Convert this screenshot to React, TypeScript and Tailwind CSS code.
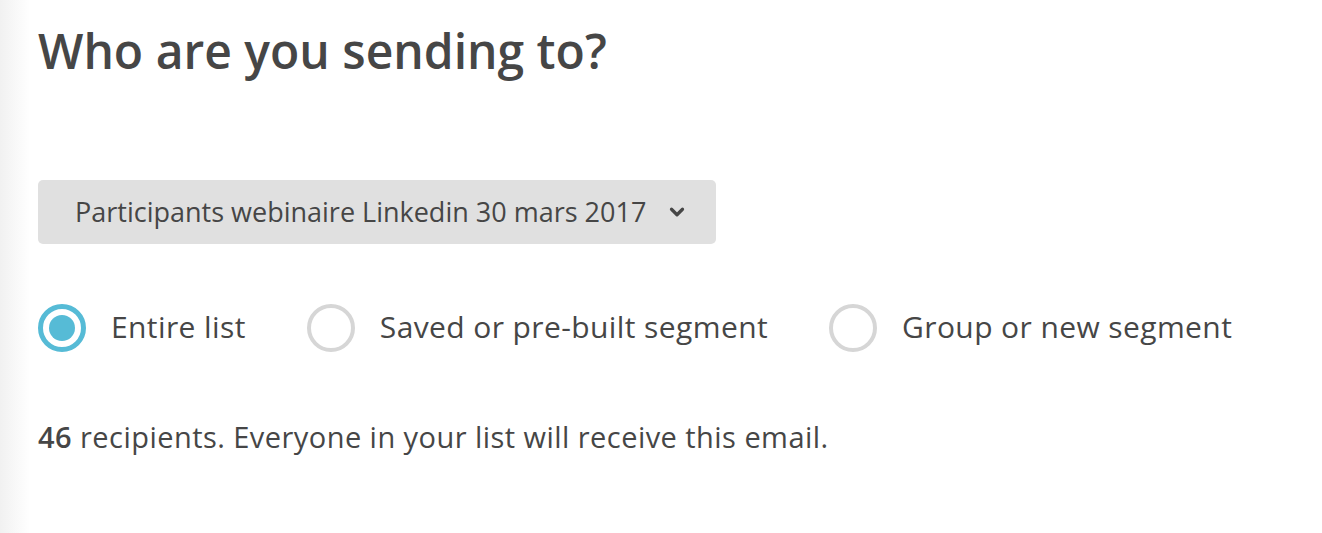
import { ChevronDown } from "lucide-react";

const options = [
  { label: "Entire list", checked: true },
  { label: "Saved or pre-built segment", checked: false },
  { label: "Group or new segment", checked: false },
];

function Radio({ checked }: { checked: boolean }) {
  return checked ? (
    <span className="w-12 h-12 rounded-full border-[5px] border-[#56bbd6] flex items-center justify-center shrink-0">
      <span className="w-[26px] h-[26px] rounded-full bg-[#56bbd6]" />
    </span>
  ) : (
    <span className="w-12 h-12 rounded-full border-[4px] border-[#d6d6d6] shrink-0" />
  );
}

export default function App() {
  return (
    <div
      className="relative w-[1322px] h-[533px] bg-white overflow-hidden text-[#464646]"
      style={{ fontFamily: '"Open Sans", "Noto Sans", sans-serif' }}
    >
      {/* soft shadow on the left edge */}
      <div className="absolute inset-y-0 left-0 w-[30px] bg-gradient-to-r from-[#f1f1f1] to-white" />

      <div className="relative pl-[38px] pt-[19px]">
        <h1 className="text-[48px] leading-[64px] font-semibold">Who are you sending to?</h1>

        <button className="mt-[97px] h-16 w-[678px] rounded-[5px] bg-[#e0e0e0] flex items-center pl-[37px] gap-[20px] text-[27px] font-medium text-[#464646]">
          <span>Participants webinaire Linkedin 30 mars 2017</span>
          <ChevronDown className="w-[22px] h-[22px]" strokeWidth={3.5} />
        </button>

        <div className="mt-[60px] flex items-center">
          {options.map((o) => (
            <label key={o.label} className="flex items-center gap-[25px] mr-[61px]">
              <Radio checked={o.checked} />
              <span className="text-[30px] tracking-[0.4px] font-medium leading-none -mt-[3px]">{o.label}</span>
            </label>
          ))}
        </div>

        <p className="mt-[70px] text-[29px] tracking-[0.45px] leading-none">
          <span className="font-semibold">46</span> recipients. Everyone in your list will receive this email.
        </p>
      </div>
    </div>
  );
}
